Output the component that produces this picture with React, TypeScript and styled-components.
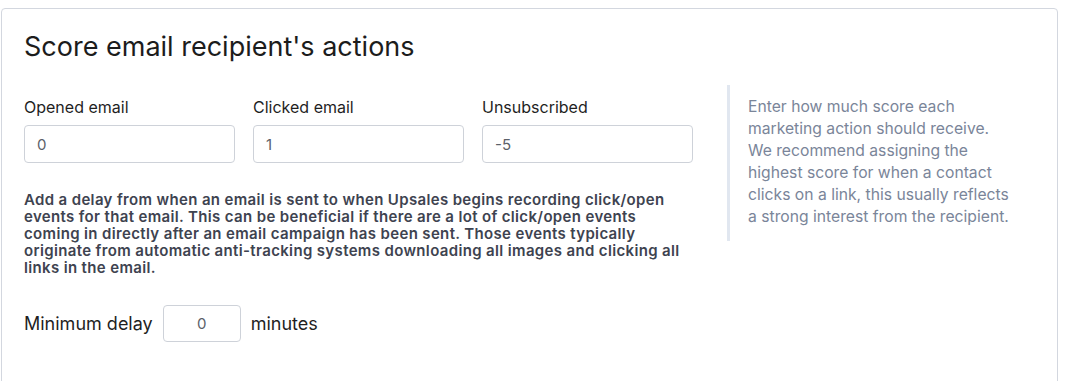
import React from "react";
import styled, { createGlobalStyle } from "styled-components";

const Global = createGlobalStyle`
  html, body { margin: 0; padding: 0; background: #ffffff; }
  body { font-family: Inter, "Noto Sans", Arial, sans-serif; color: #1f1f1f; }
  * { box-sizing: border-box; }
`;

const Page = styled.div`
  padding: 8px 30px 0 1px;
`;

const Card = styled.section`
  width: 1057px;
  min-height: 400px;
  border: 1px solid #d3d7df;
  border-radius: 4px;
  padding: 20px 24px 24px 22px;
  background: #fff;
`;

const Title = styled.h2`
  margin: 0;
  font-size: 27px;
  font-weight: 400;
  line-height: 36px;
  color: #1c1c1c;
`;

const Body = styled.div`
  display: grid;
  grid-template-columns: 668px 1fr;
  column-gap: 35px;
  margin-top: 20px;
  align-items: start;
`;

const LeftCol = styled.div`
  display: flex;
  flex-direction: column;
  padding-top: 13px;
`;

const Fields = styled.div`
  display: grid;
  grid-template-columns: repeat(3, 211px);
  column-gap: 18px;
`;

const Field = styled.label`
  display: flex;
  flex-direction: column;
  gap: 8px;
`;

const FieldLabel = styled.span`
  font-size: 16px;
  line-height: 19px;
  color: #1f1f1f;
`;

const TextInput = styled.input<{ $w?: number; $center?: boolean }>`
  width: ${(p) => (p.$w ? `${p.$w}px` : "100%")};
  height: 38px;
  border: 1px solid #ced2d9;
  border-radius: 4px;
  padding: 0 12px;
  font-family: Inter, "Noto Sans", Arial, sans-serif;
  font-size: 15px;
  color: #5c6169;
  text-align: ${(p) => (p.$center ? "center" : "left")};
  outline: none;
  background: #fff;
`;

const Note = styled.p`
  margin: 28px 0 0;
  font-size: 15px;
  font-weight: 600;
  line-height: 17px;
  letter-spacing: 0.35px;
  color: #3e4350;
  white-space: nowrap;
`;

const DelayRow = styled.div`
  display: flex;
  align-items: center;
  gap: 10px;
  margin-top: 29px;
  font-size: 18px;
  color: #1f1f1f;
`;

const Aside = styled.aside`
  border-left: 3px solid #e1e7f0;
  padding: 11px 0 13px 18px;
  font-size: 15.7px;
  line-height: 22px;
  color: #7a8599;
  white-space: nowrap;
`;

export default function App() {
  return (
    <>
      <Global />
      <Page>
        <Card>
          <Title>Score email recipient's actions</Title>
          <Body>
            <LeftCol>
              <Fields>
                <Field>
                  <FieldLabel>Opened email</FieldLabel>
                  <TextInput defaultValue="0" />
                </Field>
                <Field>
                  <FieldLabel>Clicked email</FieldLabel>
                  <TextInput defaultValue="1" />
                </Field>
                <Field>
                  <FieldLabel>Unsubscribed</FieldLabel>
                  <TextInput defaultValue="-5" />
                </Field>
              </Fields>
              <Note>
                Add a delay from when an email is sent to when Upsales begins recording click/open
                <br />
                events for that email. This can be beneficial if there are a lot of click/open events
                <br />
                coming in directly after an email campaign has been sent. Those events typically
                <br />
                originate from automatic anti-tracking systems downloading all images and clicking all
                <br />
                links in the email.
              </Note>
              <DelayRow>
                <span>Minimum delay</span>
                <TextInput $w={78} $center defaultValue="0" style={{ height: 37 }} />
                <span>minutes</span>
              </DelayRow>
            </LeftCol>
            <Aside>
              Enter how much score each
              <br />
              marketing action should receive.
              <br />
              We recommend assigning the
              <br />
              highest score for when a contact
              <br />
              clicks on a link, this usually reflects
              <br />
              a strong interest from the recipient.
            </Aside>
          </Body>
        </Card>
      </Page>
    </>
  );
}
